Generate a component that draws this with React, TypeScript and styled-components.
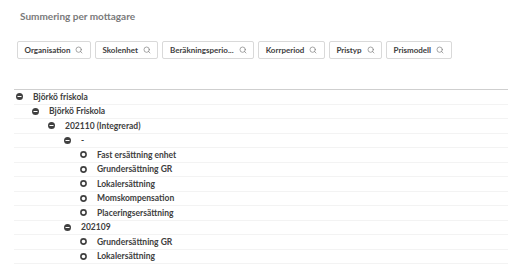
import styled, { createGlobalStyle } from 'styled-components'
import { Search } from 'lucide-react'

const GlobalStyle = createGlobalStyle`
  body {
    margin: 0;
    background: #ffffff;
    font-family: Lato, "Open Sans", sans-serif;
  }
`

const Page = styled.div`
  width: 510px;
  height: 275px;
  overflow: hidden;
  display: flex;
  flex-direction: column;
`

const Title = styled.h1`
  margin: 10px 0 0 20px;
  font-size: 10px;
  line-height: 13px;
  font-weight: 700;
  color: #7a7a7a;
`

const FilterBar = styled.div`
  display: flex;
  gap: 4px;
  margin: 18px 0 0 17px;
`

const FilterButton = styled.div`
  height: 18px;
  box-sizing: border-box;
  display: flex;
  align-items: center;
  gap: 5px;
  padding: 0 6.5px 0 6.5px;
  border: 1px solid #d9d9d9;
  border-radius: 2px;
  font-size: 8px;
  font-weight: 700;
  color: #404040;
  white-space: nowrap;

  svg {
    color: #7a7a7a;
  }
`

const Tree = styled.div`
  margin: 30px 2px 0 14px;
  border-top: 1px solid #cfcfcf;
`

interface RowProps {
  level: number
}

const Row = styled.div<RowProps>`
  height: 14.5px;
  box-sizing: border-box;
  display: flex;
  align-items: center;
  gap: 10px;
  padding-left: ${props => 2 + props.level * 16}px;
  border-bottom: 1px solid #f3f3f3;
  font-size: 8.5px;
  font-weight: 700;
  color: #404040;
  white-space: nowrap;
`

const NodeIcon = styled.svg`
  flex: none;
  width: 7px;
  height: 7px;
`

const filters = ['Organisation', 'Skolenhet', 'Beräkningsperio...', 'Korrperiod', 'Pristyp', 'Prismodell']

const rows: { level: number; label: string; open: boolean }[] = [
  { level: 0, label: 'Björkö friskola', open: true },
  { level: 1, label: 'Björkö Friskola', open: true },
  { level: 2, label: '202110 (Integrerad)', open: true },
  { level: 3, label: '-', open: true },
  { level: 4, label: 'Fast ersättning enhet', open: false },
  { level: 4, label: 'Grundersättning GR', open: false },
  { level: 4, label: 'Lokalersättning', open: false },
  { level: 4, label: 'Momskompensation', open: false },
  { level: 4, label: 'Placeringsersättning', open: false },
  { level: 3, label: '202109', open: true },
  { level: 4, label: 'Grundersättning GR', open: false },
  { level: 4, label: 'Lokalersättning', open: false },
]

function Node({ open }: { open: boolean }) {
  return (
    <NodeIcon viewBox="0 0 7 7">
      {open ? (
        <>
          <circle cx="3.5" cy="3.5" r="3.5" fill="#404040" />
          <rect x="1.5" y="3" width="4" height="1" fill="#ffffff" />
        </>
      ) : (
        <circle cx="3.5" cy="3.5" r="2.6" fill="none" stroke="#404040" strokeWidth="1.6" />
      )}
    </NodeIcon>
  )
}

export default function App() {
  return (
    <Page>
      <GlobalStyle />
      <Title>Summering per mottagare</Title>
      <FilterBar>
        {filters.map(f => (
          <FilterButton key={f}>
            {f}
            <Search size={8} strokeWidth={2} />
          </FilterButton>
        ))}
      </FilterBar>
      <Tree>
        {rows.map((r, i) => (
          <Row key={i} level={r.level}>
            <Node open={r.open} />
            {r.label}
          </Row>
        ))}
      </Tree>
    </Page>
  )
}
